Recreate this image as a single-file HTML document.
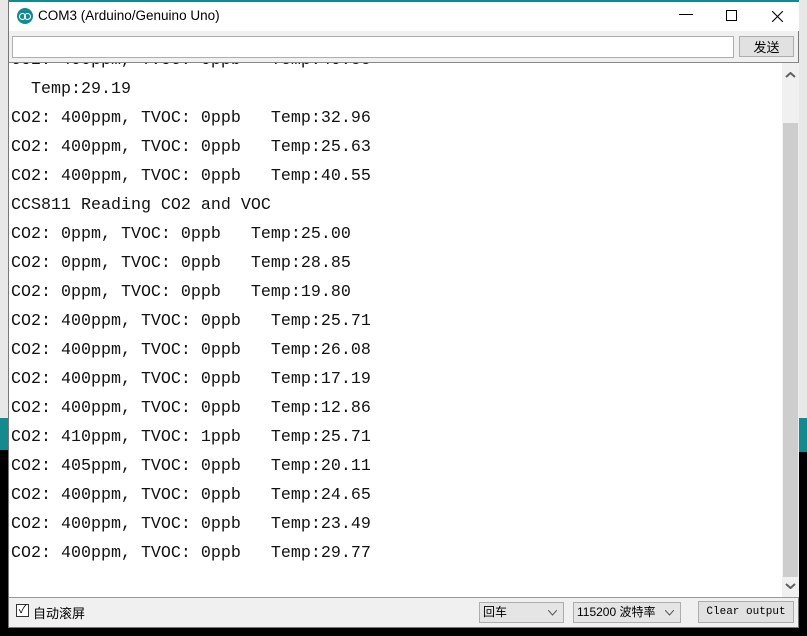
<!DOCTYPE html>
<html><head><meta charset="utf-8"><style>
*{margin:0;padding:0;box-sizing:border-box}
body{width:807px;height:636px;overflow:hidden;background:#000;position:relative;font-family:"Liberation Sans","Noto Sans CJK SC",sans-serif}
.bgl{position:absolute;left:0;top:0;width:8px;height:418px;background:#e8e8e8}
.bgr{position:absolute;right:0;top:0;width:9px;height:418px;background:#e8e8e8}
.tl{position:absolute;left:0;top:418px;width:8px;height:32px;background:#138a8e}
.tr{position:absolute;right:0;top:418px;width:9px;height:34px;background:#138a8e}
.ttop{position:absolute;left:0;top:0;width:807px;height:2px;background:#138a8e}
.win{position:absolute;left:8px;top:0;width:791px;height:628px;background:#f0f0f0;border:1px solid #777;border-top:none}
.title{position:absolute;left:0;top:0;width:790px;height:31px;background:#fff;border-top:2px solid #138a8e}
.title .t{position:absolute;left:29px;top:6px;font-size:13.5px;color:#000}
.logo{position:absolute;left:8px;top:6px;width:16px;height:16px;border-radius:50%;background:#138a8e}
.logo:before,.logo:after{content:"";position:absolute;top:5px;width:5px;height:5px;border:1px solid #fff;border-radius:50%}
.logo:before{left:2px}.logo:after{left:7px}
.ctl{position:absolute;top:6px;font-size:15px;color:#000}
.input{position:absolute;left:3px;top:36px;width:722px;height:22px;background:#fff;border:1px solid #adadad}
.btn{position:absolute;left:730px;top:36px;width:55px;height:21px;background:#e1e1e1;border:1px solid #adadad;font-size:13px;text-align:center;line-height:19px;font-family:"Noto Sans CJK SC",sans-serif}
.area{position:absolute;left:0;top:62px;width:790px;height:536px;background:#fff;border-top:1px solid #888;border-bottom:1px solid #999;overflow:hidden}
.txt{position:absolute;left:2px;top:-17px;font-family:"Liberation Mono",monospace;font-size:16.67px;line-height:29px;color:#111;white-space:pre}
.sb{position:absolute;left:773px;top:0;width:17px;height:535px;background:#f0f0f0}
.thumb{position:absolute;left:1px;top:60px;width:15px;height:454px;background:#cdcdcd}
.ar{position:absolute;left:3px;width:11px;height:6px}
.bot{position:absolute;top:603px;font-size:13px;font-family:"Noto Sans CJK SC",sans-serif}
.cb{position:absolute;left:7px;top:604px;width:13px;height:13px;border:1px solid #333;background:#fff;font-size:11px;line-height:11px;text-align:center}
.sel{position:absolute;top:602px;height:21px;border:1px solid #adadad;background:#e5e5e5;font-size:12px;line-height:19px;padding-left:3px;font-family:"Liberation Sans","Noto Sans CJK SC",sans-serif}
.sel svg{position:absolute;right:6px;top:7px}
.clr{position:absolute;left:689px;top:601px;width:96px;height:22px;border:1px solid #adadad;background:#e1e1e1;font-family:"Liberation Mono",monospace;font-size:11px;text-align:center;line-height:20px}
</style></head><body>
<div class="ttop"></div><div class="bgl"></div><div class="bgr"></div><div class="tl"></div><div class="tr"></div>
<div class="win">
<div class="title"><div class="logo"></div><div class="t">COM3 (Arduino/Genuino Uno)</div>
<div class="ctl" style="left:670px;top:12px;width:14px;height:1px;background:#000"></div>
<div class="ctl" style="left:717px;top:8px;width:11px;height:11px;border:1px solid #000"></div>
<svg class="ctl" style="left:763px;top:9px" width="11" height="11"><path d="M0 0L11 11M11 0L0 11" stroke="#000" stroke-width="1.1"/></svg></div>
<div class="input"></div><div class="btn">发送</div>
<div class="area"><div class="txt">CO2: 400ppm, TVOC: 0ppb   Temp:40.55
  Temp:29.19
CO2: 400ppm, TVOC: 0ppb   Temp:32.96
CO2: 400ppm, TVOC: 0ppb   Temp:25.63
CO2: 400ppm, TVOC: 0ppb   Temp:40.55
CCS811 Reading CO2 and VOC
CO2: 0ppm, TVOC: 0ppb   Temp:25.00
CO2: 0ppm, TVOC: 0ppb   Temp:28.85
CO2: 0ppm, TVOC: 0ppb   Temp:19.80
CO2: 400ppm, TVOC: 0ppb   Temp:25.71
CO2: 400ppm, TVOC: 0ppb   Temp:26.08
CO2: 400ppm, TVOC: 0ppb   Temp:17.19
CO2: 400ppm, TVOC: 0ppb   Temp:12.86
CO2: 410ppm, TVOC: 1ppb   Temp:25.71
CO2: 405ppm, TVOC: 0ppb   Temp:20.11
CO2: 400ppm, TVOC: 0ppb   Temp:24.65
CO2: 400ppm, TVOC: 0ppb   Temp:23.49
CO2: 400ppm, TVOC: 0ppb   Temp:29.77</div>
<div class="sb"><div class="thumb"></div>
<svg class="ar" style="top:9px" viewBox="0 0 11 6"><path d="M1 5L5.5 1L10 5" stroke="#606060" stroke-width="2" fill="none"/></svg>
<svg class="ar" style="top:520px" viewBox="0 0 11 6"><path d="M1 1L5.5 5L10 1" stroke="#606060" stroke-width="2" fill="none"/></svg></div></div>
<div class="cb">✓</div><div class="bot" style="left:24px">自动滚屏</div>
<div class="sel" style="left:470px;width:85px">回车<svg width="9" height="6"><path d="M0 0L4.5 5L9 0" stroke="#555" fill="none"/></svg></div>
<div class="sel" style="left:564px;width:108px">115200 波特率<svg width="9" height="6"><path d="M0 0L4.5 5L9 0" stroke="#555" fill="none"/></svg></div>
<div class="clr">Clear output</div>
</div>
</body></html>
